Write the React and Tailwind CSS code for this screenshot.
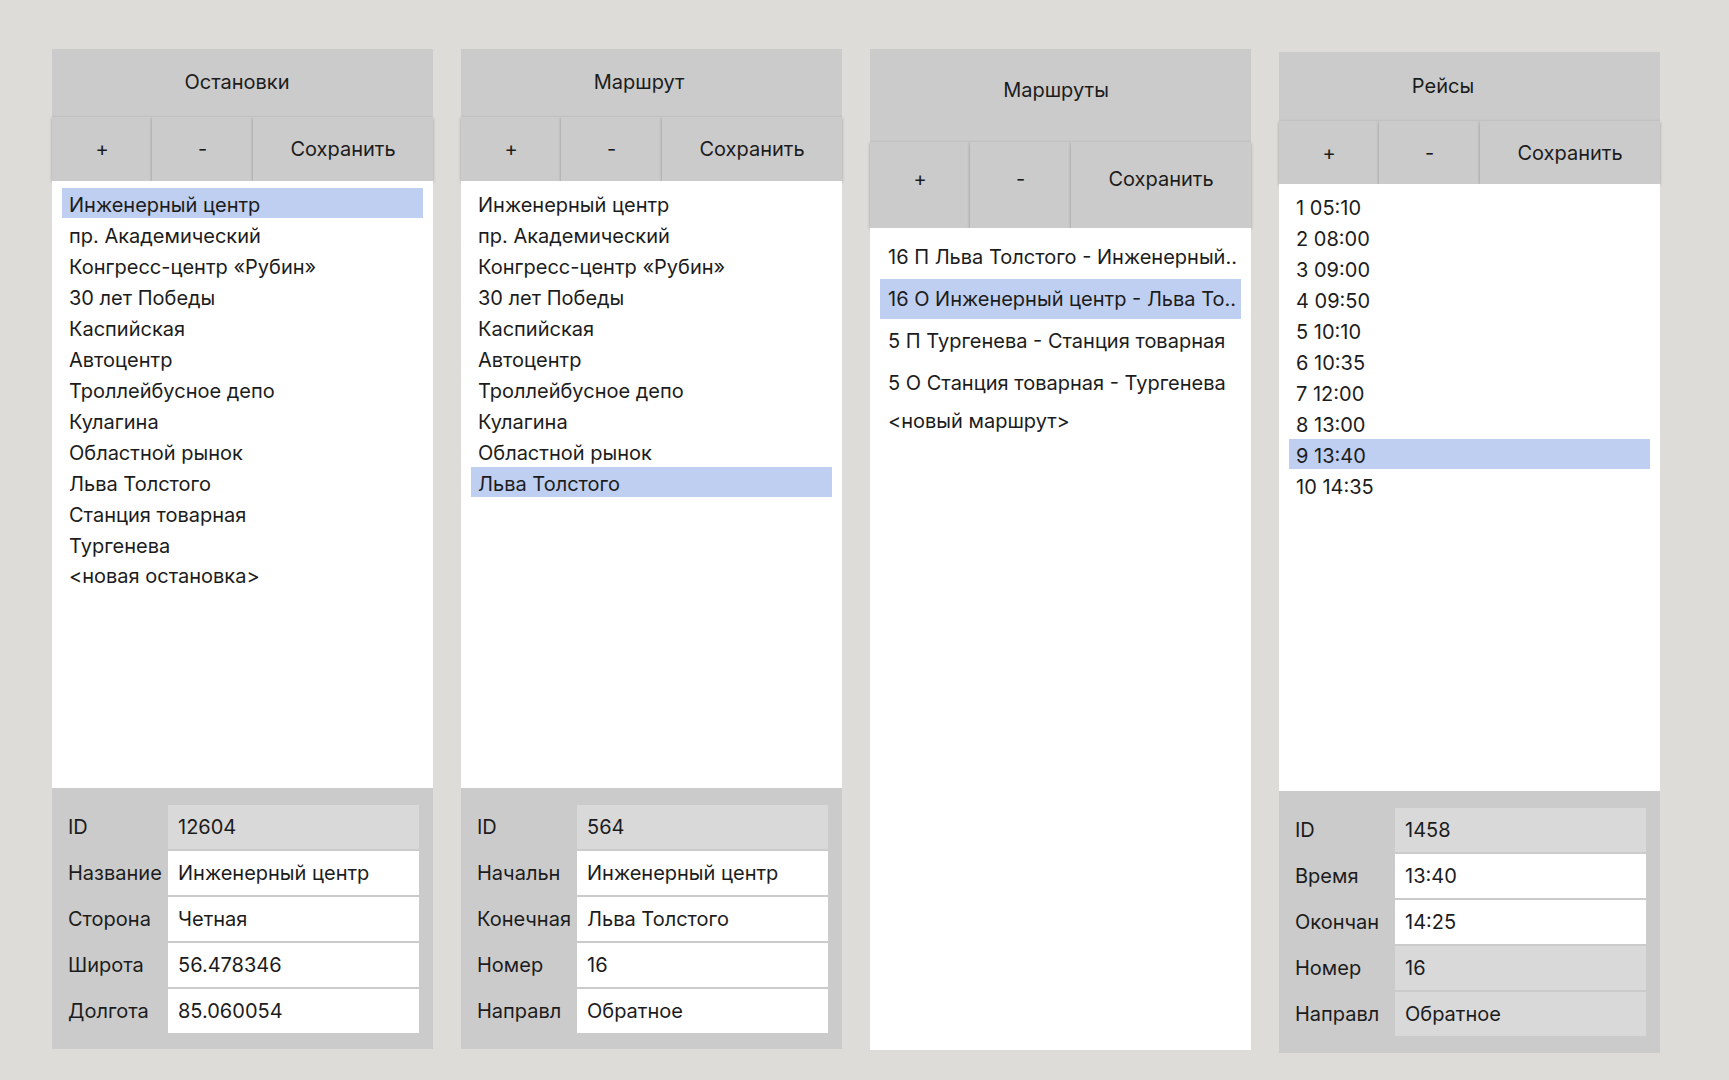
import React from "react";

const stops = [
  "Инженерный центр",
  "пр. Академический",
  "Конгресс-центр «Рубин»",
  "30 лет Победы",
  "Каспийская",
  "Автоцентр",
  "Троллейбусное депо",
  "Кулагина",
  "Областной рынок",
  "Льва Толстого",
  "Станция товарная",
  "Тургенева",
];

const trips = ["1 05:10", "2 08:00", "3 09:00", "4 09:50", "5 10:10", "6 10:35", "7 12:00", "8 13:00", "9 13:40", "10 14:35"];

function Header({ title, h, pad }) {
  return (
    <div className={`flex items-center justify-center bg-[#cbcbcb] ${h} ${pad}`}>
      <span>{title}</span>
    </div>
  );
}

function Buttons({ h, pad = "" }) {
  const btn = `flex items-center justify-center bg-[#cbcbcb] shadow-[0_1px_3px_rgba(0,0,0,0.28)] ${pad}`;
  return (
    <div className={`flex ${h}`}>
      <div className={`${btn} w-[100px]`}>+</div>
      <div className={`${btn} w-[101px]`}>-</div>
      <div className={`${btn} flex-1`}>Сохранить</div>
    </div>
  );
}

function ListRow({ text, selected, extra = "" }) {
  return (
    <div className={`flex h-[30px] mb-[1px] items-center pt-[4px] pl-[7px] whitespace-nowrap ${selected ? "bg-[#bfcff2]" : ""} ${extra}`}>
      {text}
    </div>
  );
}

function Form({ rows, h }) {
  return (
    <div className={`flex flex-col gap-[2px] bg-[#cbcbcb] pt-[17px] pl-[16px] pr-[14px] ${h}`}>
      {rows.map(([label, value, white]) => (
        <div key={label} className="flex h-[44px] items-center">
          <div className="w-[100px] whitespace-nowrap">{label}</div>
          <div className={`flex h-full flex-1 items-center pl-[10px] ${white ? "bg-white" : "bg-[#d9d9d9]"}`}>{value}</div>
        </div>
      ))}
    </div>
  );
}

export default function App() {
  return (
    <div
      className="flex h-[1080px] w-[1729px] items-start gap-[28px] bg-[#dddcd8] pl-[52px] pt-[49px] text-[20px] text-[#1c1c1c]"
      style={{ fontFamily: "Inter, 'Noto Sans', sans-serif" }}
    >
      {/* Остановки */}
      <div className="flex w-[381px] flex-col">
        <Header title="Остановки" h="h-[68px]" pad="pr-[11px] pb-[2px]" />
        <Buttons h="h-[64px]" />
        <div className="h-[607px] bg-white px-[10px] pt-[7px]">
          {stops.map((s, i) => (
            <ListRow key={s} text={s} selected={i === 0} extra={s === "Тургенева" ? "pl-[5px]" : ""} />
          ))}
          <ListRow text="<новая остановка>" extra="-mt-[1px]" />
        </div>
        <Form
          h="h-[261px]"
          rows={[
            ["ID", "12604", false],
            ["Название", "Инженерный центр", true],
            ["Сторона", "Четная", true],
            ["Широта", "56.478346", true],
            ["Долгота", "85.060054", true],
          ]}
        />
      </div>

      {/* Маршрут */}
      <div className="flex w-[381px] flex-col">
        <Header title="Маршрут" h="h-[68px]" pad="pr-[25px] pb-[2px]" />
        <Buttons h="h-[64px]" />
        <div className="h-[607px] bg-white px-[10px] pt-[7px]">
          {stops.slice(0, 10).map((s, i) => (
            <ListRow key={s} text={s} selected={i === 9} />
          ))}
        </div>
        <Form
          h="h-[261px]"
          rows={[
            ["ID", "564", false],
            ["Начальн", "Инженерный центр", true],
            ["Конечная", "Льва Толстого", true],
            ["Номер", "16", true],
            ["Направл", "Обратное", true],
          ]}
        />
      </div>

      {/* Маршруты */}
      <div className="flex w-[381px] flex-col">
        <Header title="Маршруты" h="h-[93px]" pad="pr-[9px] pb-[12px]" />
        <Buttons h="h-[86px]" pad="pb-[12px]" />
        <div className="h-[822px] bg-white px-[10px] pt-[9px]">
          {[
            "16 П Льва Толстого - Инженерный..",
            "16 О Инженерный центр - Льва То..",
            "5 П Тургенева - Станция товарная",
            "5 О Станция товарная - Тургенева",
          ].map((s, i) => (
            <div
              key={s}
              className={`mb-[2px] flex h-[40px] items-center pl-[8px] whitespace-nowrap overflow-hidden ${i === 1 ? "bg-[#bfcff2]" : ""}`}
            >
              {s}
            </div>
          ))}
          <div className="flex h-[32px] items-center pl-[8px]">&lt;новый маршрут&gt;</div>
        </div>
      </div>

      {/* Рейсы */}
      <div className="mt-[3px] flex w-[381px] flex-col">
        <Header title="Рейсы" h="h-[69px]" pad="pr-[53px] pb-[2px]" />
        <Buttons h="h-[63px]" />
        <div className="h-[607px] bg-white px-[10px] pt-[7px]">
          {trips.map((s, i) => (
            <ListRow key={s} text={s} selected={i === 8} />
          ))}
        </div>
        <Form
          h="h-[262px]"
          rows={[
            ["ID", "1458", false],
            ["Время", "13:40", true],
            ["Окончан", "14:25", true],
            ["Номер", "16", false],
            ["Направл", "Обратное", false],
          ]}
        />
      </div>
    </div>
  );
}
